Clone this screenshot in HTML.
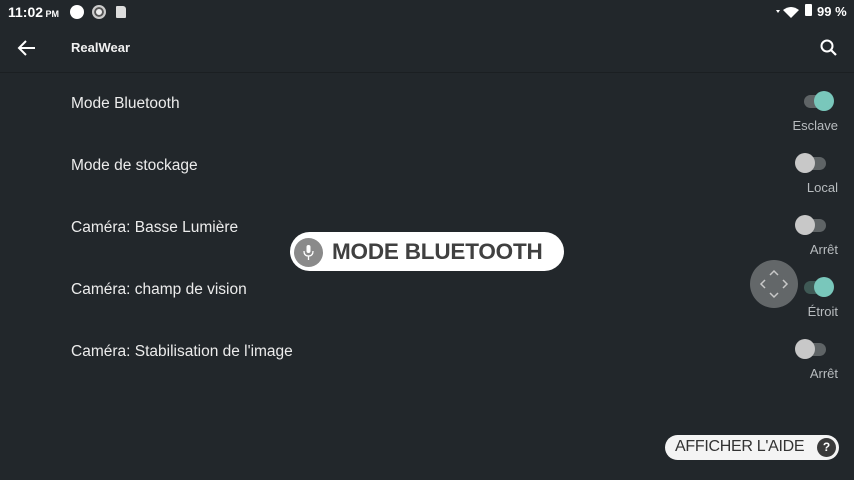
<!DOCTYPE html><html><head><style>
body{margin:0;width:854px;height:480px;background:#22272b;font-family:"Liberation Sans",sans-serif;position:relative;overflow:hidden;color:#e8e8e8}
.a{position:absolute}
.t{left:71px;font-size:15.5px;color:#ececec}
.track{position:absolute;left:804px;width:22px;height:13px;border-radius:7px}
.th{position:absolute;width:20px;height:20px;border-radius:50%}
.lab{position:absolute;right:16px;font-size:13px;color:#b8bcbf}
</style></head><body>
<div class="a" style="left:8px;top:4px;font-size:14px;color:#fff;font-weight:bold">11:02<span style="font-size:9px"> PM</span></div>
<div class="a" style="left:70px;top:5px;width:14px;height:14px;border-radius:50%;background:#fff"></div>
<div class="a" style="left:92px;top:5px;width:10px;height:10px;border-radius:50%;border:2px solid #ccc;background:#eee;box-shadow:inset 0 0 0 2px #555"></div>
<div class="a" style="left:116px;top:6px;width:10px;height:12px;background:#ddd;border-radius:1px 3px 1px 1px"></div>
<svg class="a" style="left:776px;top:5px" width="26" height="14"><path d="M0 5h4l-2 3z" fill="#fff"/><path d="M7 5 Q15 -1 23 5 L15 13z" fill="#fff"/></svg>
<div class="a" style="left:805px;top:4px;width:7px;height:12px;background:#fff;border-radius:1px"></div>
<div class="a" style="left:817px;top:4px;font-size:13px;color:#fff;font-weight:bold">99 %</div>
<svg class="a" style="left:17px;top:38px" width="20" height="20"><path d="M18 10H3M9 3 2 10l7 7" stroke="#fff" stroke-width="2" fill="none"/></svg>
<div class="a" style="left:71px;top:40px;font-size:13px;font-weight:bold;color:#f0f0f0">RealWear</div>
<svg class="a" style="left:819px;top:38px" width="20" height="20"><circle cx="8" cy="8" r="5.5" stroke="#fff" stroke-width="2" fill="none"/><path d="M12 12l5 5" stroke="#fff" stroke-width="2.2"/></svg>
<div class="a" style="left:0;top:72px;width:854px;height:1px;background:#1b1f22"></div>

<div class="a t" style="top:95px">Mode Bluetooth</div>
<div class="track" style="top:95px;background:#5f6466"></div><div class="th" style="left:814px;top:91px;background:#79c7bb"></div>
<div class="lab" style="top:118px">Esclave</div>

<div class="a t" style="top:157px">Mode de stockage</div>
<div class="track" style="top:157px;background:#5f6466"></div><div class="th" style="left:795px;top:153px;background:#c8c8c8"></div>
<div class="lab" style="top:180px">Local</div>

<div class="a t" style="top:219px">Caméra: Basse Lumière</div>
<div class="track" style="top:219px;background:#5f6466"></div><div class="th" style="left:795px;top:215px;background:#c8c8c8"></div>
<div class="lab" style="top:242px">Arrêt</div>

<div class="a t" style="top:281px">Caméra: champ de vision</div>
<div class="track" style="top:281px;background:#3f5955"></div><div class="th" style="left:814px;top:277px;background:#79c7bb"></div>
<div class="lab" style="top:304px">Étroit</div>

<div class="a t" style="top:343px">Caméra: Stabilisation de l'image</div>
<div class="track" style="top:343px;background:#5f6466"></div><div class="th" style="left:795px;top:339px;background:#c8c8c8"></div>
<div class="lab" style="top:366px">Arrêt</div>

<div class="a" style="left:290px;top:232px;width:274px;height:39px;border-radius:20px;background:#fff"></div>
<div class="a" style="left:294px;top:238px;width:29px;height:29px;border-radius:50%;background:#8a8a8a"></div>
<svg class="a" style="left:300px;top:243px" width="18" height="20"><rect x="6.5" y="2" width="4" height="8" rx="2" fill="#fff"/><path d="M4 8q0 5 4.5 5t4.5-5M8.5 13v4" stroke="#fff" stroke-width="1.3" fill="none"/></svg>
<div class="a" style="left:332px;top:239px;font-size:22.5px;letter-spacing:-0.2px;font-weight:bold;color:#404040">MODE BLUETOOTH</div>

<div class="a" style="left:750px;top:260px;width:48px;height:48px;border-radius:50%;background:#636769"></div>
<svg class="a" style="left:750px;top:260px" width="48" height="48" fill="none" stroke="#c8c8c8" stroke-width="1.5"><path d="M20 15l4-4 4 4M20 33l4 4 4-4M15 20l-4 4 4 4M33 20l4 4-4 4"/></svg>

<div class="a" style="left:665px;top:435px;width:174px;height:25px;border-radius:13px;background:#f4f4f4"></div>
<div class="a" style="left:675px;top:438px;font-size:16px;letter-spacing:-0.3px;color:#333">AFFICHER L'AIDE</div>
<div class="a" style="left:817px;top:438px;width:19px;height:19px;border-radius:50%;background:#3a3a3a;color:#fff;font-size:12px;font-weight:bold;text-align:center;line-height:19px">?</div>
</body></html>
